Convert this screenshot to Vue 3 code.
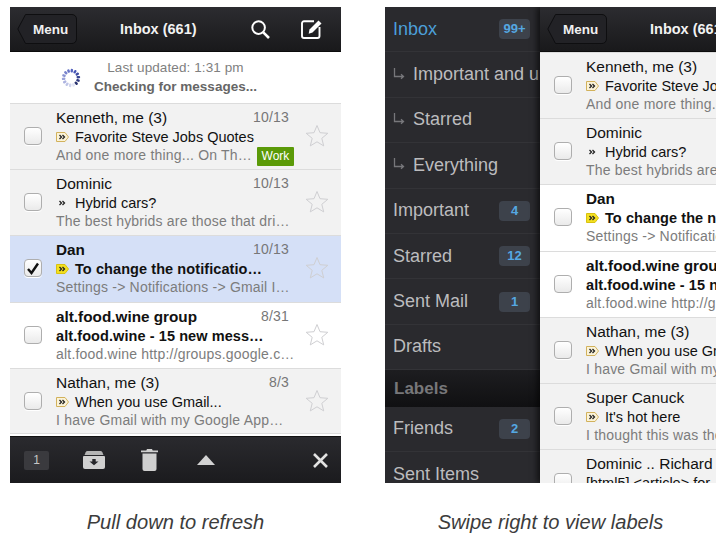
<template>
  <div class="page">
    <figure v-for="phone in phones" :key="phone.caption" class="shot">
      <div class="phone">
        <aside v-if="phone.sidebar" class="sidebar">
          <template v-for="item in menu" :key="item.name">
            <div v-if="item.heading" class="menu-heading">{{ item.name }}</div>
            <div v-else class="menu-row" :class="{ active: item.active }">
              <svg v-if="item.sub" class="sub-arrow" width="12" height="13" viewBox="0 0 12 13">
                <path d="M1.500 1v8.500H10M8 7.300l2.500 2.200L8 11.700" fill="none" stroke="#77777b" stroke-width="1.300" />
              </svg>
              <span class="menu-name">{{ item.name }}</span>
              <span v-if="item.count" class="menu-count">{{ item.count }}</span>
            </div>
          </template>
        </aside>

        <div class="main">
          <header class="topbar">
            <button class="back">
              <svg class="back-shape" width="60" height="30" viewBox="0 0 60 30">
                <path d="M8.500 .5H55a4.500 4.500 0 0 1 4.500 4.500V25a4.500 4.500 0 0 1-4.500 4.500H8.500L.8 15Z" fill="#222226" stroke="#0e0e10" />
              </svg>
              <span>Menu</span>
            </button>
            <div class="title">Inbox (661)</div>
            <svg class="top-icon search" width="19" height="19" viewBox="0 0 19 19">
              <circle cx="7.600" cy="7.600" r="6.300" fill="none" stroke="#fff" stroke-width="2" />
              <path d="m12.300 12.300 5.700 5.700" stroke="#fff" stroke-width="2.600" />
            </svg>
            <svg class="top-icon compose" width="22" height="20" viewBox="0 0 22 20">
              <path d="M13 2.300H3A2 2 0 0 0 1 4.300V17a2 2 0 0 0 2 2h13.500a2 2 0 0 0 2-2V8" fill="none" stroke="#fff" stroke-width="1.900" />
              <path d="M8.500 10.500 17.500 1.500l3 3-9 9-3.800 1.300Z" fill="#fff" />
            </svg>
          </header>

          <div v-if="phone.pull" class="pull">
            <svg class="spinner" width="20" height="20" viewBox="0 0 20 20">
              <rect
                v-for="spoke in spokes"
                :key="spoke.angle"
                x="8.800"
                y="0.800"
                width="2.400"
                height="3.600"
                rx="1"
                :fill="spoke.color"
                :transform="`rotate(${spoke.angle} 10 10)`"
              />
            </svg>
            <div class="pull-text">
              <div class="updated">Last updated: 1:31 pm</div>
              <div class="checking">Checking for messages...</div>
            </div>
          </div>

          <div class="list">
            <div
              v-for="row in phone.rows"
              :key="row.name + row.subject"
              class="row"
              :class="{ read: row.read, selected: row.selected, unread: !row.read && !row.selected, bold: row.bold }"
            >
              <span class="check">
                <svg v-if="row.selected" width="14" height="13" viewBox="0 0 14 13">
                  <path d="M2 7l3.500 4L12 1.500" fill="none" stroke="#111" stroke-width="2.400" />
                </svg>
              </span>
              <div class="body">
                <div class="line-top">
                  <span class="name">{{ row.name }}</span>
                  <span class="date">{{ row.date }}</span>
                </div>
                <div class="subject">
                  <svg v-if="row.mark === 'tag' || row.mark === 'hot'" class="mark" width="13" height="10" viewBox="0 0 13 10">
                    <path
                      d="M.5.500H9L12.500 5 9 9.500H.5Z"
                      :fill="row.mark === 'hot' ? '#f4e020' : '#fbf3d8'"
                      :stroke="row.mark === 'hot' ? '#d8c210' : '#d2b25c'"
                    />
                    <path d="M3.500 3 5.500 5 3.500 7M6.500 3 8.500 5 6.500 7" fill="none" stroke="#222" stroke-width="1.300" />
                  </svg>
                  <svg v-else-if="row.mark === 'plain'" class="mark" width="13" height="10" viewBox="0 0 13 10">
                    <path d="M3.500 3 5.500 5 3.500 7M6.500 3 8.500 5 6.500 7" fill="none" stroke="#222" stroke-width="1.300" />
                  </svg>
                  <span>{{ row.subject }}</span>
                </div>
                <div class="preview">
                  <span>{{ row.preview }}</span>
                  <span v-if="row.label" class="label">{{ row.label }}</span>
                </div>
              </div>
              <svg class="star" width="24" height="23" viewBox="0 0 24 23">
                <path d="M12 1.500l3 7.200 7.800.6-6 5 1.900 7.600L12 17.800l-6.700 4.100 1.900-7.600-6-5 7.800-.6Z" fill="none" stroke="#cfcfd2" stroke-width="1" />
              </svg>
            </div>
          </div>

          <footer v-if="phone.toolbar" class="toolbar">
            <span class="count">1</span>
            <svg class="tool archive" width="22" height="18" viewBox="0 0 22 18">
              <path d="M4.500 0h13a2 2 0 0 1 1.800 1.200L20.500 4h-19l1.200-2.800A2 2 0 0 1 4.500 0Z" fill="#b4b4b4" />
              <path d="M1 5h20a1 1 0 0 1 1 1v10a2 2 0 0 1-2 2H2a2 2 0 0 1-2-2V6a1 1 0 0 1 1-1Z" fill="#d0d0d0" />
              <path d="M9.300 8h3.400v2.500h2.800L11 14.200l-4.500-3.700h2.800Z" fill="#26262a" />
            </svg>
            <svg class="tool trash" width="17" height="22" viewBox="0 0 17 22">
              <path d="M6 0h5l.7 1.500H17v1.700H0V1.500h5.300Z" fill="#cfcfcf" />
              <path d="M1.500 4.500h14V20a2 2 0 0 1-2 2h-10a2 2 0 0 1-2-2Z" fill="#cfcfcf" />
            </svg>
            <span class="tool up"></span>
            <svg class="close" width="15" height="15" viewBox="0 0 15 15">
              <path d="M1 1l13 13M14 1 1 14" stroke="#e2e2e2" stroke-width="2.600" />
            </svg>
          </footer>
        </div>
      </div>
      <figcaption>{{ phone.caption }}</figcaption>
    </figure>
  </div>
</template>

<script setup>
const kenneth = { name: 'Kenneth, me (3)', date: '10/13', mark: 'tag', subject: 'Favorite Steve Jobs Quotes', preview: 'And one more thing... On Th…', label: 'Work', read: true }
const dominic = { name: 'Dominic', date: '10/13', mark: 'plain', subject: 'Hybrid cars?', preview: 'The best hybrids are those that dri…', read: true }
const dan = { name: 'Dan', date: '10/13', mark: 'hot', subject: 'To change the notificatio…', preview: 'Settings -> Notifications -> Gmail I…', bold: true }
const food = { name: 'alt.food.wine group', date: '8/31', subject: 'alt.food.wine - 15 new mess…', preview: 'alt.food.wine http://groups.google.c…', bold: true }
const nathan = { name: 'Nathan, me (3)', date: '8/3', mark: 'tag', subject: 'When you use Gmail...', preview: 'I have Gmail with my Google App…', read: true }

const phones = [
  {
    caption: 'Pull down to refresh',
    pull: true,
    toolbar: true,
    rows: [kenneth, dominic, { ...dan, selected: true }, food, nathan],
  },
  {
    caption: 'Swipe right to view labels',
    sidebar: true,
    rows: [
      kenneth,
      dominic,
      dan,
      food,
      nathan,
      { name: 'Super Canuck', date: '8/2', mark: 'tag', subject: "It's hot here", preview: 'I thought this was the…', read: true },
      { name: 'Dominic .. Richard', date: '8/1', subject: '[html5] <article> for…', preview: '', read: true },
    ],
  },
]

const menu = [
  { name: 'Inbox', count: '99+', active: true },
  { name: 'Important and unread', sub: true },
  { name: 'Starred', sub: true },
  { name: 'Everything', sub: true },
  { name: 'Important', count: '4' },
  { name: 'Starred', count: '12' },
  { name: 'Sent Mail', count: '1' },
  { name: 'Drafts' },
  { name: 'Labels', heading: true },
  { name: 'Friends', count: '2' },
  { name: 'Sent Items' },
]

// head of the spinner sits lower right, the tail fades going back round the top
const spokes = Array.from({ length: 14 }, (_, i) => {
  const light = 30 + (i / 13) * 62
  return { angle: 135 - i * (360 / 14), color: `hsl(232, 45%, ${light}%)` }
})
</script>

<style>
body { background: #fff; }
</style>

<style scoped>
.page {
  display: flex;
  gap: 44px;
  padding: 7px 0 0 10px;
  width: 720px;
  height: 535px;
  box-sizing: border-box;
  overflow: hidden;
  font-family: "Liberation Sans", Arial, sans-serif;
}
.shot { margin: 0; width: 331px; flex: none; }
.phone {
  display: flex;
  width: 331px;
  height: 476px;
  overflow: hidden;
  background: #fff;
}
figcaption {
  margin-top: 28px;
  text-align: center;
  font-size: 20.100px;
  font-style: italic;
  color: #3c3c3c;
}

.sidebar {
  flex: none;
  width: 155px;
  background: #2a2a2e;
  box-sizing: border-box;
}
.menu-row {
  display: flex;
  align-items: center;
  height: 45.400px;
  box-sizing: border-box;
  padding: 0 10px 0 8px;
  border-bottom: 1px solid #333337;
  font-size: 18px;
  color: #bcbcbe;
  white-space: nowrap;
  overflow: hidden;
}
.menu-row.active { color: #4c9fd8; }
.menu-name { flex: 1; }
.sub-arrow { flex: none; margin: -3px 8px 0 0; }
.menu-count {
  flex: none;
  width: 31px;
  height: 20px;
  line-height: 20px;
  border-radius: 4px;
  background: #3d424b;
  color: #55a8e2;
  font-size: 13px;
  font-weight: bold;
  text-align: center;
}
.menu-heading {
  height: 36.500px;
  box-sizing: border-box;
  padding: 1px 0 0 9px;
  line-height: 36.500px;
  background: linear-gradient(#1d1d20, #101012);
  color: #77777a;
  font-size: 17px;
  font-weight: bold;
}

.main {
  flex: none;
  width: 331px;
  display: flex;
  flex-direction: column;
  box-shadow: -3px 0 6px rgba(0, 0, 0, 0.6);
  background: #fff;
  height: 476px;
}
.topbar {
  flex: none;
  display: flex;
  align-items: center;
  height: 45px;
  padding-left: 7px;
  box-sizing: border-box;
  background: linear-gradient(#2c2c30, #19191b);
  border-bottom: 1px solid #0c0c0c;
  color: #fff;
}
.back {
  position: relative;
  flex: none;
  width: 60px;
  height: 30px;
  padding: 0 0 0 16px;
  border: 0;
  background: none;
  color: #f0f0f0;
  font: bold 13.500px "Liberation Sans", Arial, sans-serif;
  text-align: left;
}
.back span { position: relative; }
.back-shape { position: absolute; left: 0; top: 0; }
.title {
  flex: none;
  width: 77px;
  margin-left: 43px;
  font-size: 14.500px;
  font-weight: bold;
  white-space: nowrap;
  color: #f2f2f2;
}
.top-icon { flex: none; }
.search { margin-left: 54px; }
.compose { margin-left: 31px; }

.pull {
  flex: none;
  display: grid;
  grid-template-columns: 1fr auto 1fr;
  align-items: center;
  height: 51px;
  background: #fff;
}
.spinner { grid-column: 1; justify-self: end; margin-right: 13px; }
.pull-text { grid-column: 2; text-align: center; font-size: 13.500px; white-space: nowrap; }
.updated { color: #808080; letter-spacing: 0.100px; line-height: 18px; }
.checking { color: #666; font-weight: bold; line-height: 20px; }

.list { flex: 1; min-height: 0; overflow: hidden; }
.row {
  display: flex;
  align-items: flex-start;
  height: 66.200px;
  box-sizing: border-box;
  border-top: 1px solid #dcdcdc;
  padding-left: 14px;
  overflow: hidden;
}
.row:last-child { border-bottom: 1px solid #dcdcdc; }
.row.read { background: #f2f2f2; }
.row.unread { background: #fff; }
.row.selected { background: #d5e0f7; }
.check {
  flex: none;
  display: flex;
  align-items: center;
  justify-content: center;
  width: 18px;
  height: 18px;
  margin-top: 23px;
  box-sizing: border-box;
  border: 1px solid #aeaeae;
  border-radius: 4px;
  background: linear-gradient(#fff, #eaeaea);
  box-shadow: 0 1px 0 #fff;
}
.body {
  flex: none;
  width: 239px;
  margin-left: 14px;
  padding-top: 4px;
  white-space: nowrap;
  color: #111;
}
.line-top {
  display: flex;
  justify-content: space-between;
  padding-right: 6px;
  height: 19px;
  line-height: 19px;
  font-size: 15.500px;
}
.bold .name { font-size: 15.300px; font-weight: bold; }
.bold .subject { font-weight: bold; letter-spacing: 0.080px; }
.date { color: #777; font-size: 14px; letter-spacing: 0.200px; }
.subject {
  display: flex;
  align-items: center;
  height: 20px;
  line-height: 20px;
  font-size: 14.500px;
}
.mark { flex: none; margin-right: 6px; }
.preview {
  display: flex;
  height: 17px;
  line-height: 17px;
  font-size: 14px;
  color: #7c7c7c;
  letter-spacing: 0.200px;
}
.label {
  flex: none;
  height: 19px;
  line-height: 19px;
  margin-left: 5px;
  padding: 0 4.500px;
  border-radius: 1px;
  background: #5b9a08;
  color: #fff;
  font-size: 12px;
  letter-spacing: 0;
}
.star { flex: none; margin: 20px 0 0 10px; }

.toolbar {
  flex: none;
  margin-top: auto;
  display: flex;
  align-items: center;
  height: 47px;
  padding: 0 13px 0 14px;
  box-sizing: border-box;
  background: linear-gradient(#2a2a2e, #1b1b1e);
  border-top: 1px solid #111;
}
.count {
  flex: none;
  width: 25px;
  height: 19px;
  line-height: 19px;
  border-radius: 2px;
  background: #3a3a3e;
  color: #c6c6c6;
  font-size: 12px;
  text-align: center;
}
.tool { flex: none; }
.archive { margin-left: 34px; }
.trash { margin-left: 36px; }
.up {
  margin-left: 39px;
  width: 0;
  height: 0;
  border-left: 9px solid transparent;
  border-right: 9px solid transparent;
  border-bottom: 10px solid #d2d2d2;
}
.close { flex: none; margin-left: auto; }
</style>
